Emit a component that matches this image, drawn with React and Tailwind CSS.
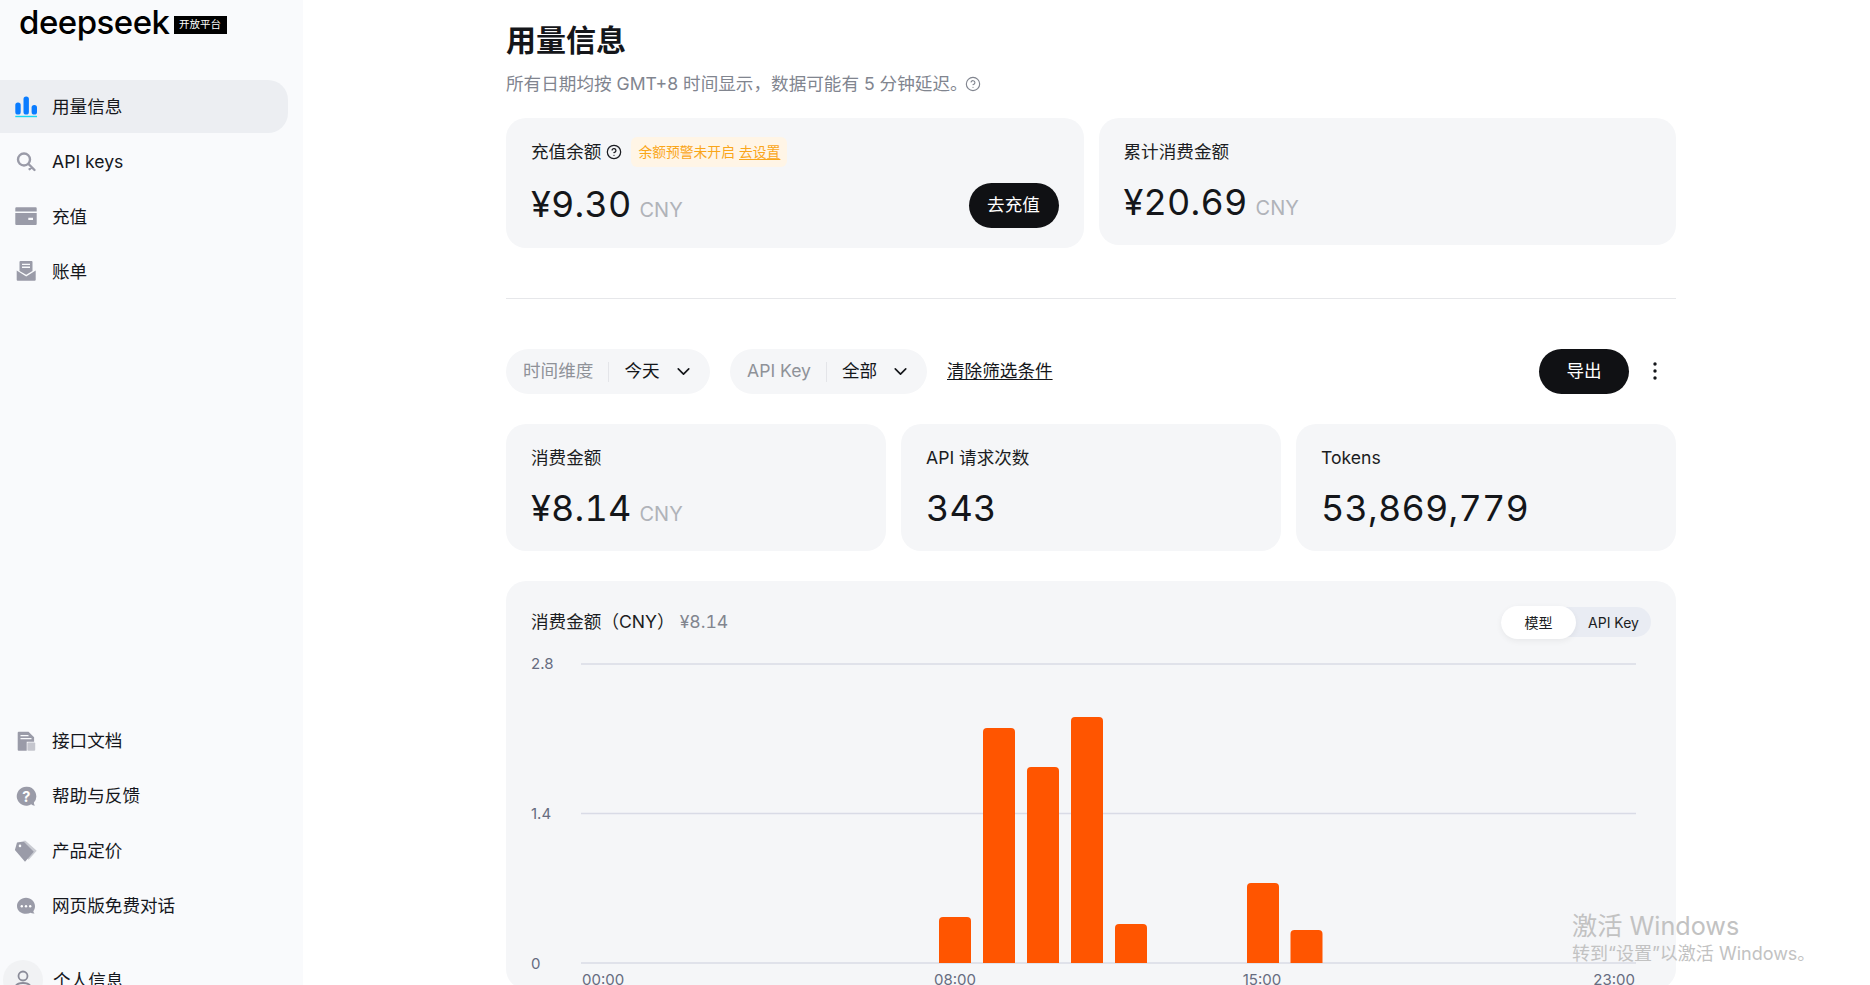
import React from 'react'
import { ChevronDown, CircleHelp } from 'lucide-react'

const GREY = '#9a9ba8'

const ChartIcon = () => (
  <svg width="24" height="24" viewBox="0 0 24 24">
    <rect x="1.3" y="7.5" width="5.4" height="12" rx="2.6" fill="#0a7cff" />
    <rect x="9.5" y="1.5" width="5.4" height="18" rx="2.6" fill="#0a7cff" />
    <rect x="17.6" y="10" width="5.4" height="9.5" rx="2.6" fill="#0a7cff" />
    <rect x="1.3" y="20.8" width="21.7" height="1.4" fill="#14d8f5" />
  </svg>
)

const KeyIcon = () => (
  <svg width="24" height="24" viewBox="0 0 24 24" fill="none" stroke={GREY} strokeWidth="2.4">
    <circle cx="10" cy="9.5" r="6" />
    <path d="M14.5 14l6 6M17.6 17.2l-2 2" strokeLinecap="round" />
  </svg>
)

const CardIcon = () => (
  <svg width="24" height="24" viewBox="0 0 24 24" fill={GREY}>
    <path d="M2.3 2.3h19.4a1 1 0 0 1 1 1v3.2H1.3V3.3a1 1 0 0 1 1-1z" />
    <path fillRule="evenodd" d="M1.3 8h21.4v11a1 1 0 0 1-1 1H2.3a1 1 0 0 1-1-1zM14.3 12.7v2.3H19v-2.3z" />
  </svg>
)

const MailIcon = () => (
  <svg width="24" height="24" viewBox="0 0 24 24" fill={GREY}>
    <path fillRule="evenodd" d="M6.5 1h11a1 1 0 0 1 1 1v9l-6.3 3.8L5.5 11V2a1 1 0 0 1 1-1zM8 3.8v1.3h8V3.8zM8 6.6v1.3h8V6.6z" />
    <path d="M2.7 10.5l9.5 6 9.5-6v9.2a1 1 0 0 1-1 1H3.7a1 1 0 0 1-1-1z" />
  </svg>
)

const DocIcon = () => (
  <svg width="24" height="24" viewBox="0 0 24 24">
    <path fillRule="evenodd" fill={GREY} d="M4.7 2.7h9.8l5.6 5.6v4.4h-7.4v9H4.7a1 1 0 0 1-1-1v-17a1 1 0 0 1 1-1zM6.5 6v1.3h8V6zM6.5 9v1.3h11V9z" />
    <rect x="13.4" y="13.4" width="7.8" height="8.3" rx="1" fill={GREY} opacity="0.55" />
  </svg>
)

const HelpIcon = () => (
  <svg width="24" height="24" viewBox="0 0 24 24">
    <path fill={GREY} d="M12.2 2.7a9.5 9.5 0 1 0 5 17.6c1 .9 2.4 1.4 4 1.3-1-.8-1.3-2-1.3-3.2a9.5 9.5 0 0 0-7.7-15.7z" />
    <text x="12.2" y="17.5" textAnchor="middle" fontSize="14.5" fontWeight="700" fill="#fff" fontFamily="Inter, sans-serif">?</text>
  </svg>
)

const TagIcon = () => (
  <svg width="24" height="24" viewBox="0 0 24 24">
    <path fill={GREY} opacity="0.5" d="M9.5 1.7h2l11.2 10-8 9-1-1z" />
    <path fillRule="evenodd" fill={GREY} d="M3 3.5l6.5-1 10.3 10.2L11 22.7.9 11zM6 5.6a1.3 1.3 0 1 0 0 2.6 1.3 1.3 0 0 0 0-2.6z" />
  </svg>
)

const ChatIcon = () => (
  <svg width="24" height="24" viewBox="0 0 24 24">
    <path fill={GREY} d="M12 3.7c5 0 9 3.7 9 8.5 0 2-.7 3.6-1.7 5 .1 1 .6 1.6 1.3 2.3-1.5.3-3 0-4-.7-1.3.6-2.9 1-4.6 1-5 0-9-3.4-9-7.900S7 3.7 12 3.7z" />
    <circle cx="7.8" cy="12.3" r="1.2" fill="#fff" />
    <circle cx="12" cy="12.3" r="1.2" fill="#fff" />
    <circle cx="16.2" cy="12.3" r="1.2" fill="#fff" />
  </svg>
)

const NavItem = ({ icon, label, active }) => (
  <div className={`flex h-[53px] w-[288px] items-center gap-[14px] rounded-r-[20px] pl-[14px] text-[17.6px] text-[#15171c] ${active ? 'bg-[#eceef2]' : ''}`}>
    {icon}
    <span className="pt-[2px]">{label}</span>
  </div>
)

const Sidebar = () => (
  <aside className="flex h-[1040px] w-[303px] shrink-0 flex-col bg-[#f9fafc]">
    <div className="flex h-[80px] items-start pl-[19px] pt-[2px]">
      <span className="text-[33px] font-medium leading-[40px] tracking-[-0.5px] text-black">deepseek</span>
      <span className="ml-[4px] mt-[14px] flex h-[18px] w-[53px] items-center justify-center bg-black text-[10.5px] leading-none text-white">开放平台</span>
    </div>
    <nav className="flex flex-col gap-[2px]">
      <NavItem active icon={<ChartIcon />} label="用量信息" />
      <NavItem icon={<KeyIcon />} label="API keys" />
      <NavItem icon={<CardIcon />} label="充值" />
      <NavItem icon={<MailIcon />} label="账单" />
    </nav>
    <nav className="mt-[416px] flex flex-col gap-[2px]">
      <NavItem icon={<DocIcon />} label="接口文档" />
      <NavItem icon={<HelpIcon />} label="帮助与反馈" />
      <NavItem icon={<TagIcon />} label="产品定价" />
      <NavItem icon={<ChatIcon />} label="网页版免费对话" />
    </nav>
    <div className="mt-[28px] flex items-center gap-[10px] pl-[3px] text-[17.6px] text-[#15171c]">
      <div className="flex h-10 w-10 items-center justify-center rounded-full bg-[#f1f2f4]">
        <svg width="22" height="22" viewBox="0 0 22 22" fill="none" stroke="#8b8c99" strokeWidth="1.8">
          <circle cx="11" cy="7" r="4.5" />
          <path d="M3 20c0-4 3.5-6 8-6s8 2 8 6" />
        </svg>
      </div>
      <span className="pt-[2px]">个人信息</span>
    </div>
  </aside>
)

const Amount = ({ value, unit }) => (
  <div className="flex items-baseline">
    <span className="text-[36px] leading-[45px] tabular-nums tracking-[0.2px] text-[#14161a]">{value}</span>
    {unit && <span className="ml-[8px] text-[20px] text-[#b0b3b9]">{unit}</span>}
  </div>
)

const StatCard = ({ label, value, unit }) => (
  <div className="h-[127px] flex-1 rounded-[20px] bg-[#f5f6f8] pl-[25px] pt-[20px]">
    <div className="text-[17.6px] leading-[28px] text-[#1b1d22]">{label}</div>
    <div className="mt-[14px]">
      <Amount value={value} unit={unit} />
    </div>
  </div>
)

const FilterPill = ({ label, value, className }) => (
  <div className={`flex h-[45px] items-center rounded-full bg-[#f5f6f8] pl-[17px] text-[17.6px] ${className}`}>
    <span className="text-[#8f9298]">{label}</span>
    <span className="mx-[15px] h-[20px] w-px bg-[#e4e5e9]" />
    <span className="text-[#14161a]">{value}</span>
    <ChevronDown size={21} strokeWidth={1.9} className="ml-[13px] text-[#14161a]" />
  </div>
)

const bars = [
  { x: 939, top: 917 },
  { x: 983, top: 728 },
  { x: 1027, top: 767 },
  { x: 1071, top: 717 },
  { x: 1115, top: 924 },
  { x: 1247, top: 883 },
  { x: 1290.5, top: 930 },
]

const UsageChart = () => (
  <svg width="1170" height="344" viewBox="506 645 1170 344" className="block font-['Inter','Noto_Sans_CJK_SC',sans-serif]">
    {[664, 813.5, 963].map((y) => (
      <line key={y} x1="581" x2="1636" y1={y} y2={y} stroke="#d9dbe6" strokeWidth="1.3" />
    ))}
    {bars.map((b) => (
      <path
        key={b.x}
        fill="#ff5500"
        d={`M${b.x} 963V${b.top + 4}a4 4 0 0 1 4-4h24a4 4 0 0 1 4 4V963z`}
      />
    ))}
    <g fill="#666c80" fontSize="15">
      <text x="531" y="669">2.8</text>
      <text x="531" y="819">1.4</text>
      <text x="531" y="969">0</text>
      <text x="582" y="985">00:00</text>
      <text x="955" y="985" textAnchor="middle">08:00</text>
      <text x="1262" y="985" textAnchor="middle">15:00</text>
      <text x="1635" y="985" textAnchor="end">23:00</text>
    </g>
  </svg>
)

const App = () => {
  return (
    <div className="relative flex h-screen overflow-hidden bg-white font-['Inter','Noto_Sans_CJK_SC',sans-serif]">
      <Sidebar />
      <main className="ml-[203px] w-[1170px] shrink-0 pt-[21px]">
        <h1 className="text-[30px] font-bold leading-[38px] text-[#14161a]">用量信息</h1>
        <p className="mt-[11px] flex items-center text-[17.6px] leading-[28px] text-[#81858f]">
          所有日期均按 GMT+8 时间显示，数据可能有 5 分钟延迟。
          <CircleHelp size={16} strokeWidth={1.7} className="-ml-[3px]" />
        </p>

        <div className="mt-[20px] flex items-start gap-[15px]">
          <div className="h-[130px] flex-1 rounded-[20px] bg-[#f5f6f8] px-[25px] pt-[19px]">
            <div className="flex h-[30px] items-center text-[17.6px] text-[#1b1d22]">
              充值余额
              <CircleHelp size={16} strokeWidth={1.9} className="ml-[5px] text-[#1b1d22]" />
              <span className="ml-[9px] flex h-[30px] items-center rounded-[6px] bg-[#fff5e6] px-[7px] text-[13.8px] text-[#faa61a]">
                余额预警未开启
                <span className="ml-[4px] underline underline-offset-2">去设置</span>
              </span>
            </div>
            <div className="mt-[16px] flex h-[45px] items-center justify-between">
              <div className="pb-[2px]">
                <Amount value="¥9.30" unit="CNY" />
              </div>
              <button className="h-[45px] w-[90px] rounded-full bg-[#101114] text-[17.6px] text-white">去充值</button>
            </div>
          </div>
          <div className="h-[127px] flex-1 rounded-[20px] bg-[#f5f6f8] px-[25px] pt-[19px]">
            <div className="flex h-[30px] items-center text-[17.6px] text-[#1b1d22]">累计消费金额</div>
            <div className="mt-[13px] flex h-[45px] items-center">
              <Amount value="¥20.69" unit="CNY" />
            </div>
          </div>
        </div>

        <div className="mt-[50px] h-px bg-[#e6e7ea]" />

        <div className="mt-[50px] flex items-center">
          <FilterPill className="w-[204px]" label="时间维度" value="今天" />
          <FilterPill className="ml-[20px] w-[197px]" label="API Key" value="全部" />
          <span className="ml-[20px] text-[17.6px] text-[#14161a] underline underline-offset-2">清除筛选条件</span>
          <button className="ml-auto h-[45px] w-[90px] rounded-full bg-[#101114] text-[17.6px] text-white">导出</button>
          <svg width="8" height="20" viewBox="0 0 8 20" fill="#14161a" className="mb-[1px] ml-[22px] mr-[17px]">
            <circle cx="4" cy="3" r="1.7" />
            <circle cx="4" cy="10" r="1.7" />
            <circle cx="4" cy="17" r="1.7" />
          </svg>
        </div>

        <div className="mt-[30px] flex gap-[15px]">
          <StatCard label="消费金额" value="¥8.14" unit="CNY" />
          <StatCard label="API 请求次数" value="343" />
          <StatCard label="Tokens" value="53,869,779" />
        </div>

        <section className="mt-[30px] rounded-[20px] bg-[#f5f6f8] pt-[21px]">
          <div className="mb-[3px] flex h-[40px] items-center justify-between pl-[25px] pr-[25px]">
            <div className="flex items-center text-[17.6px] text-[#1b1d22]">
              消费金额（CNY）
              <span className="ml-[5px] tabular-nums text-[#81858f]">¥8.14</span>
            </div>
            <div className="flex h-[30px] w-[150px] items-center rounded-full bg-[#e9ecf3] text-[14px] text-[#1b1d22]">
              <span className="flex h-[33px] w-[75px] items-center justify-center rounded-full bg-white shadow-[0_2px_6px_rgba(0,0,0,0.06)]">模型</span>
              <span className="flex flex-1 items-center justify-center">API Key</span>
            </div>
          </div>
          <UsageChart />
        </section>
      </main>

      <div className="absolute left-[1572px] top-[910px] text-[#c2c2c2]">
        <div className="text-[25.2px] leading-[32px]">激活 Windows</div>
        <div className="text-[18px] leading-[24px]">转到“设置”以激活 Windows。</div>
      </div>
    </div>
  )
}

export default App
